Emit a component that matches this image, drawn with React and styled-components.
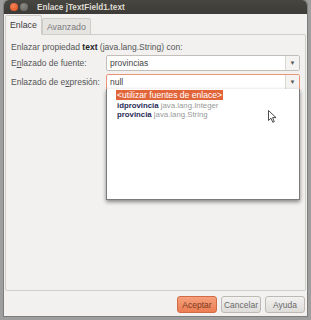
import React from 'react'
import styled, { createGlobalStyle } from 'styled-components'

const Global = createGlobalStyle`
    html, body {
        margin     : 0;
        padding    : 0;
        background : #9e9e9e;
        font-family: "Liberation Sans", "DejaVu Sans", sans-serif;
    }
`

const Screen = styled.div`
    width      : 311px;
    height     : 320px;
    overflow   : hidden;
    padding    : 0 4px 0 4px;
    box-sizing : border-box;
`

const Window = styled.div`
    width          : 303px;
    height         : 316px;
    display        : flex;
    flex-direction : column;
    background     : #f2f1f0;
    border-radius  : 5px 5px 0 0;
    overflow       : hidden;
    box-shadow     : 0 0 0 1px #7d7d7d;
`

const TitleBar = styled.div`
    height      : 14px;
    flex        : none;
    display     : flex;
    align-items : center;
    gap         : 2px;
    padding     : 0 0 0 6px;
    background  : linear-gradient(#474641, #3c3b37);
`

const Dot = styled.span`
    width         : 8px;
    height        : 8px;
    border-radius : 50%;
    background    : ${p => p.$close ? 'radial-gradient(circle at 40% 35%, #f6845a, #df4a16)' : 'radial-gradient(circle at 40% 35%, #8a8983, #5f5e5a)'};
`

const Title = styled.span`
    margin-left : 7px;
    font-size   : 8.2px;
    font-weight : bold;
    color       : #dfdbd2;
`

const Body = styled.div`
    flex           : 1;
    display        : flex;
    flex-direction : column;
    padding        : 1px 1px 3px 1px;
`

const Tabs = styled.div`
    display : flex;
    height  : 19px;
`

const Tab = styled.div`
    padding       : 0 4px;
    display       : flex;
    align-items   : center;
    font-size     : 8.8px;
    color         : ${p => p.$active ? '#3c3c3c' : '#7a7a7a'};
    background    : ${p => p.$active ? '#f2f1f0' : '#e6e4e1'};
    border        : 1px solid #cfcdca;
    border-bottom : ${p => p.$active ? '1px solid #f2f1f0' : '1px solid #cfcdca'};
    border-radius : 2px 2px 0 0;
    margin-bottom : -1px;
    position      : relative;
    z-index       : ${p => p.$active ? 1 : 0};
    ${p => !p.$active && 'margin-top: 3px;'}
`

const Panel = styled.div`
    flex           : 1;
    border         : 1px solid #cfcdca;
    border-radius  : 0 2px 2px 2px;
    padding        : 7px 5px 0 5px;
    display        : flex;
    flex-direction : column;
    gap            : 3px;
    position       : relative;
`

const Label = styled.div`
    font-size   : 8.5px;
    color       : #555;
    width       : 95px;
    flex        : none;
    white-space : nowrap;
`

const Intro = styled.div`
    font-size   : 8.5px;
    line-height : 10px;
    color       : #555;
    white-space : nowrap;
    b { color : #222; }
`

const Row = styled.div`
    display     : flex;
    align-items : center;
`

const Combo = styled.div`
    flex          : 1;
    height        : 14px;
    display       : flex;
    align-items   : center;
    background    : #fff;
    border        : 1px solid ${p => p.$focus ? '#e9957a' : '#c2bfbb'};
    border-radius : 2px;
    font-size     : 8.5px;
    color         : #444;
    span { flex : 1; padding-left : 3px; }
`

const Arrow = styled.div`
    width           : 13px;
    height          : 100%;
    display         : flex;
    align-items     : center;
    justify-content : center;
    border-left     : 1px solid #dad8d4;
    background      : #f4f3f2;
    font-size       : 6px;
    color           : #555;
`

const Popup = styled.div`
    position       : absolute;
    left           : 100px;
    top            : 54px;
    width          : 194px;
    height         : 111px;
    box-sizing     : border-box;
    background     : #fff;
    border         : 1px solid #7b7b7b;
    border-top     : none;
    box-shadow     : 0 2px 4px rgba(0,0,0,0.45);
    padding        : 1px 0 0 9px;
    display        : flex;
    flex-direction : column;
    align-items    : flex-start;
`

const Item = styled.div`
    font-size     : ${p => p.$sel ? '8.6px' : '7.8px'};
    line-height   : 9px;
    color         : ${p => p.$sel ? '#fff' : '#999'};
    background    : ${p => p.$sel ? '#e2653a' : 'transparent'};
    padding       : ${p => p.$sel ? '1px 1px 0 1px' : '0 1px'};
    margin-bottom : ${p => p.$sel ? '1px' : '0'};
    white-space   : nowrap;
    b { color : #1f2a55; font-weight : bold; }
`

const Cursor = styled.svg`
    position : absolute;
    left     : 161px;
    top      : 21px;
`

const Buttons = styled.div`
    display         : flex;
    justify-content : flex-end;
    gap             : 4px;
    padding         : 5px 1px 0 0;
`

const Button = styled.div`
    width           : 38px;
    height          : 15px;
    display         : flex;
    align-items     : center;
    justify-content : center;
    font-size       : 8.5px;
    border-radius   : 3px;
    color           : ${p => p.$primary ? '#7a3b22' : '#6a6a6a'};
    background      : ${p => p.$primary ? 'linear-gradient(#f5a07c, #ec7d52)' : 'linear-gradient(#f3f2f1, #dedcd9)'};
    border          : 1px solid ${p => p.$primary ? '#d16a45' : '#bdbab6'};
`

const App = () => {
    return (
        <>
            <Global />
            <Screen>
                <Window>
                    <TitleBar>
                        <Dot $close />
                        <Dot />
                        <Title>Enlace jTextField1.text</Title>
                    </TitleBar>
                    <Body>
                        <Tabs>
                            <Tab $active>Enlace</Tab>
                            <Tab>Avanzado</Tab>
                        </Tabs>
                        <Panel>
                            <Intro>Enlazar propiedad <b>text</b> (java.lang.String) con:</Intro>
                            <Row>
                                <Label>E<u>n</u>lazado de fuente:</Label>
                                <Combo><span>provincias</span><Arrow>▼</Arrow></Combo>
                            </Row>
                            <Row>
                                <Label>Enlazado de e<u>x</u>presión:</Label>
                                <Combo $focus><span>null</span><Arrow>▼</Arrow></Combo>
                            </Row>
                            <Popup>
                                <Item $sel>&lt;utilizar fuentes de enlace&gt;</Item>
                                <Item><b>idprovincia</b> java.lang.Integer</Item>
                                <Item><b>provincia</b> java.lang.String</Item>
                                <Cursor width="9" height="13" viewBox="0 0 9 13">
                                    <path d="M0.5 0.5 L0.5 10.5 L3 8.2 L4.8 12.3 L6.3 11.6 L4.6 7.6 L8 7.6 Z" fill="#fff" stroke="#222" strokeWidth="0.8" />
                                </Cursor>
                            </Popup>
                        </Panel>
                        <Buttons>
                            <Button $primary>Aceptar</Button>
                            <Button>Cancelar</Button>
                            <Button>Ayuda</Button>
                        </Buttons>
                    </Body>
                </Window>
            </Screen>
        </>
    )
}

export default App
